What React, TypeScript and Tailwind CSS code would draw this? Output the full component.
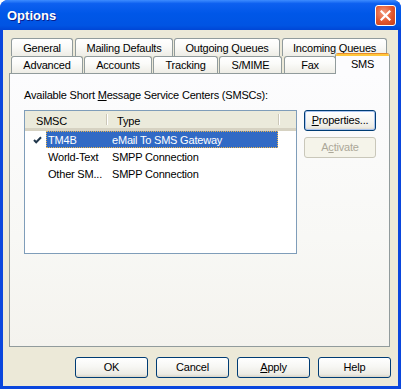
import React from "react";

const font = "font-['Liberation_Sans',Arial,sans-serif] text-[11px] leading-[13px] tracking-[-0.2px] text-black";

function Tab({ label, w, ml = "", front = false }: { label: string; w: string; ml?: string; front?: boolean }) {
  return (
    <div
      className={`${w} ${ml} flex items-center justify-center rounded-t-[3px] border border-[#919b9c] ${
        front ? "h-[17px] border-b-0" : "h-[18px] border-b-0"
      } bg-[linear-gradient(to_bottom,#ffffff_0%,#fbfbf9_40%,#eeede6_100%)]`}
    >
      <span className="pt-[1px]">{label}</span>
    </div>
  );
}

function XpButton({
  children,
  w = "w-[73px]",
  disabled = false,
  focused = false,
}: {
  children: React.ReactNode;
  w?: string;
  disabled?: boolean;
  focused?: boolean;
}) {
  return (
    <div
      className={`${w} h-[21px] shrink-0 flex items-center justify-center rounded-[3px] border ${
        disabled
          ? "border-[#c9c7ba] bg-[#f5f4ea] text-[#aca899]"
          : "border-[#003c74] bg-[linear-gradient(to_bottom,#ffffff_0%,#f7f7f4_45%,#ecebe4_85%,#d8d3c6_100%)]"
      } ${focused ? "shadow-[inset_0_0_0_1px_#a9c3ee]" : ""}`}
    >
      {children}
    </div>
  );
}

function Check() {
  return (
    <svg width="9" height="8" viewBox="0 0 9 8" className="shrink-0">
      <path d="M1 4 L3.2 6.3 L8 1.2" fill="none" stroke="#21374c" strokeWidth="2" />
    </svg>
  );
}

export default function App() {
  const rows = [
    { name: "TM4B", type: "eMail To SMS Gateway", sel: true },
    { name: "World-Text", type: "SMPP Connection", sel: false },
    { name: "Other SM...", type: "SMPP Connection", sel: false },
  ];

  return (
    <div className={`${font} w-[401px] h-[389px] flex flex-col rounded-t-[8px] bg-[#0a46dd] overflow-hidden`}>
      {/* title bar */}
      <div className="h-[30px] shrink-0 flex items-center justify-between pl-[7px] pr-[5px] bg-[linear-gradient(to_bottom,#3d8cff_0%,#0d60f0_12%,#0057e8_45%,#0054e3_85%,#0046d6_100%)]">
        <span className="font-['Liberation_Sans',Arial,sans-serif] text-[13px] tracking-normal font-bold text-white [text-shadow:1px_1px_0_#0a1e8a]">
          Options
        </span>
        <div className="w-[21px] h-[21px] flex items-center justify-center rounded-[3px] border border-white bg-[radial-gradient(circle_at_40%_35%,#f39a7c_0%,#e2552c_55%,#c4401a_100%)]">
          <svg width="11" height="11" viewBox="0 0 11 11">
            <path d="M1.5 1.5 L9.5 9.5 M9.5 1.5 L1.5 9.5" stroke="white" strokeWidth="2.2" strokeLinecap="square" />
          </svg>
        </div>
      </div>

      {/* client area */}
      <div className="flex-1 mx-[3px] mb-[3px] bg-[#ece9d8] flex flex-col">
        {/* tab rows */}
        <div className="flex pl-[8px] pt-[8px]">
          <Tab label="General" w="w-[62px]" />
          <Tab label="Mailing Defaults" w="w-[98px]" ml="ml-[2px]" />
          <Tab label="Outgoing Queues" w="w-[106px]" ml="ml-[1px]" />
          <Tab label="Incoming Queues" w="w-[105px]" ml="ml-[2px]" />
        </div>
        <div className="flex items-end pl-[8px] h-[17px]">
          <Tab label="Advanced" w="w-[72px]" front />
          <Tab label="Accounts" w="w-[68px]" ml="ml-[1px]" front />
          <Tab label="Tracking" w="w-[65px]" ml="ml-[1px]" front />
          <Tab label="S/MIME" w="w-[63px]" ml="ml-[1px]" front />
          <Tab label="Fax" w="w-[52px]" ml="ml-[2px]" front />
          <div className="relative z-10 w-[55px] h-[21px] -ml-[1px] -mb-[1px] flex flex-col rounded-t-[3px] border-x border-[#919b9c] bg-[#fcfcfe] overflow-hidden">
            <div className="h-[1px] bg-[#e68b2c]" />
            <div className="h-[2px] bg-[#ffc73c]" />
            <div className="flex-1 flex justify-center pt-[2px]">SMS</div>
          </div>
        </div>

        {/* tab page */}
        <div className="ml-[6px] mr-[8px] h-[274px] border border-[#919b9c] bg-[linear-gradient(to_bottom,#fcfcfe_0%,#f8f8f5_60%,#f4f3ee_100%)] pl-[14px] pt-[15px]">
          <div>
            Available Short <span className="underline">M</span>essage Service Centers (SMSCs):
          </div>
          <div className="mt-[8px] flex gap-[7px]">
            {/* list view */}
            <div className="w-[273px] h-[144px] border border-[#7f9db9] bg-white flex flex-col">
              <div className="h-[20px] flex bg-[#ebeadb] border-b-[3px] border-[#d6d2c2]">
                <div className="w-[81px] flex items-center pl-[11px] pt-[3px]">SMSC</div>
                <div className="w-[2px] my-[3px] bg-[#cbc7b8] border-r border-white" />
                <div className="w-[170px] flex items-center pl-[9px] pt-[3px]">Type</div>
                <div className="w-[2px] my-[3px] bg-[#cbc7b8] border-r border-white" />
              </div>
              {rows.map((r) => (
                <div key={r.name} className="h-[17px] flex items-center">
                  <div className="w-[21px] flex justify-end pr-[4px]">{r.sel && <Check />}</div>
                  <div
                    className={`w-[232px] h-[17px] flex items-center ${
                      r.sel ? "bg-[#316ac5] text-white border border-dotted border-[#e8b450]" : "border border-transparent"
                    }`}
                  >
                    <span className="w-[65px] pl-[1px] pt-[1px] whitespace-nowrap">{r.name}</span>
                    <span className="pt-[1px] whitespace-nowrap">{r.type}</span>
                  </div>
                </div>
              ))}
            </div>
            <div className="flex flex-col gap-[6px]">
              <XpButton w="w-[72px]" focused>
                <span>
                  <span className="underline">P</span>roperties...
                </span>
              </XpButton>
              <XpButton w="w-[72px]" disabled>
                <span>
                  A<span className="underline">c</span>tivate
                </span>
              </XpButton>
            </div>
          </div>
        </div>

        {/* dialog buttons */}
        <div className="mt-[10px] flex justify-end gap-[8px] pr-[7px]">
          <XpButton>OK</XpButton>
          <XpButton>Cancel</XpButton>
          <XpButton>
            <span>
              <span className="underline">A</span>pply
            </span>
          </XpButton>
          <XpButton>Help</XpButton>
        </div>
      </div>
    </div>
  );
}
